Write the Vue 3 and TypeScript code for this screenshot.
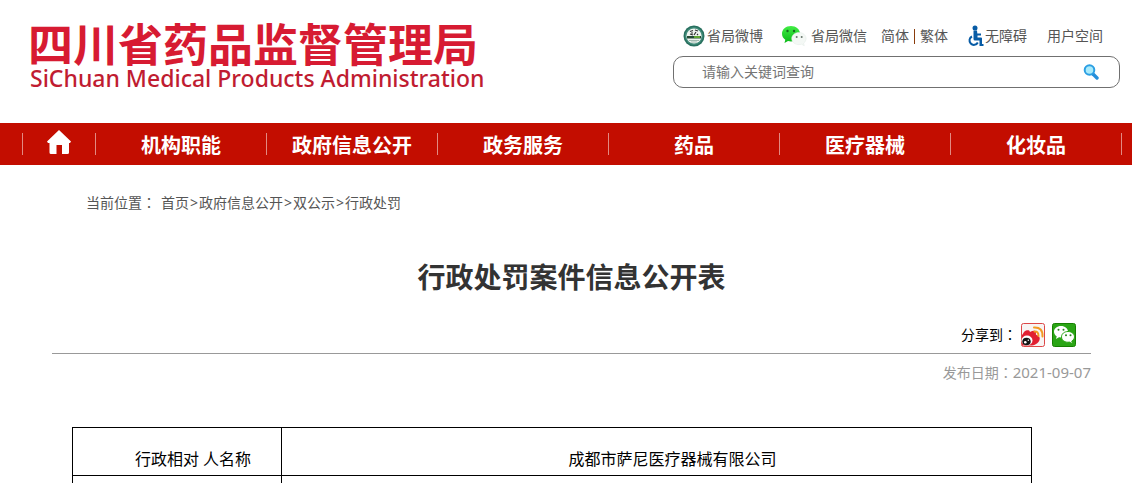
<script setup lang="ts">
import { ref } from 'vue'

const keyword = ref('')
const sections: string[] = ['机构职能', '政府信息公开', '政务服务', '药品', '医疗器械', '化妆品']
const crumbs: string[] = ['首页', '政府信息公开', '双公示', '行政处罚']
const rows: { label: string; value: string }[] = [
  { label: '行政相对 人名称', value: '成都市萨尼医疗器械有限公司' },
  { label: '', value: '' },
]
</script>

<template>
  <div class="page">
    <header class="header">
      <div class="brand">
        <div class="brand-cn">四川省药品监督管理局</div>
        <div class="brand-en">SiChuan Medical Products Administration</div>
      </div>
      <div class="tools">
        <nav class="links" aria-label="快捷链接">
          <a class="link weibo" href="#">
            <svg width="22" height="22" viewBox="0 0 22 22" aria-hidden="true">
              <circle cx="11" cy="11" r="10.5" fill="#28705f" />
              <circle cx="11" cy="11" r="9" fill="#438d7b" />
              <circle cx="11" cy="11" r="7.6" fill="#f0f5f1" />
              <path d="M7 6.500l3-1M12 5l3 1M8 8h2M13 7l-2 3M7 9l3 1M14 9l1 1" stroke="#333" stroke-width="1.2" fill="none" />
              <path d="M4 11h14v2.500H4z" fill="#254b36" />
              <path d="M11 11h6v2h-6z" fill="#60a735" />
              <path d="M6 15.500h10M8 17h6" stroke="#a1b8af" />
            </svg>
            <span>省局微博</span>
          </a>
          <a class="link wechat" href="#">
            <svg width="26" height="22" viewBox="0 0 26 22" aria-hidden="true">
              <defs>
                <linearGradient id="bubble-green" x1="0" y1="0" x2="0" y2="1">
                  <stop offset="0" stop-color="#42ed45" />
                  <stop offset="1" stop-color="#09b817" />
                </linearGradient>
              </defs>
              <path d="M10 1C4.700 1 1 4.300 1 8.700c0 2.500 1.300 4.600 3.300 6L3.500 18l3.500-2c1 .3 2 .4 3 .4 5 0 9-3.300 9-7.700S15 1 10 1z" fill="url(#bubble-green)" />
              <circle cx="6.500" cy="6" r="1.200" fill="#176a20" />
              <circle cx="13" cy="6" r="1.200" fill="#176a20" />
              <path d="M18 7.500c-4 0-7.300 2.600-7.300 6.100s3.300 6 7.300 6c1 0 1.800-.1 2.600-.4l2.700 1.600-.7-2.600c1.500-1.100 2.500-2.700 2.500-4.600 0-3.500-3.100-6.100-7.100-6.100z" fill="#f4f8f5" stroke="#e1ebe4" stroke-width=".5" />
              <circle cx="15.700" cy="12" r="1" fill="#68756b" />
              <circle cx="20.700" cy="12" r="1" fill="#68756b" />
            </svg>
            <span>省局微信</span>
          </a>
          <span class="scripts"><a href="#">简体</a><i class="bar"></i><a href="#">繁体</a></span>
          <a class="link access" href="#">
            <svg width="17" height="22" viewBox="0 0 17 22" aria-hidden="true">
              <circle cx="8" cy="3" r="2.500" fill="#075ba5" />
              <path d="M6.500 5.500h3.500l.3 3H14v2h-3.500v2H14q1 0 1 1v5.500h1.500V21H12.500v-5.500H8q-1.500 0-1.500-1.500z" fill="#075ba5" />
              <path d="M5 11.500A4.400 4.400 0 1 0 10.800 17.500" fill="none" stroke="#075ba5" stroke-width="2" />
            </svg>
            <span>无障碍</span>
          </a>
          <a class="link space" href="#">用户空间</a>
        </nav>
        <form class="search" role="search" @submit.prevent>
          <input v-model="keyword" type="text" placeholder="请输入关键词查询" aria-label="请输入关键词查询" />
          <button type="submit" aria-label="搜索">
            <svg width="16" height="16" viewBox="0 0 16 16" aria-hidden="true">
              <path d="M10 10l4 4" stroke="#258fdb" stroke-width="3.400" stroke-linecap="round" />
              <circle cx="6.500" cy="6" r="4.800" fill="#a9ebfb" stroke="#2c9fe3" stroke-width="2" />
            </svg>
          </button>
        </form>
      </div>
    </header>

    <nav class="menu" aria-label="主导航">
      <div class="menu-list">
        <a class="home" href="#" aria-label="首页">
          <svg width="24" height="24" viewBox="0 0 24 24" aria-hidden="true">
            <path d="M12 0L24 11.500l-1 1.500h-1v9.500q0 1.500-1.500 1.500H15v-9H9.500v9H4q-1.500 0-1.500-1.500V13H1l-1-1.500z" fill="#fff" />
          </svg>
        </a>
        <a v-for="name in sections" :key="name" class="section" href="#">{{ name }}</a>
      </div>
    </nav>

    <main class="main">
      <div class="crumbs">
        <span class="here">当前位置<span class="colon">：</span></span>
        <template v-for="(name, i) in crumbs" :key="name"><span v-if="i" class="arrow">&gt;</span><a href="#">{{ name }}</a></template>
      </div>
      <h1>行政处罚案件信息公开表</h1>
      <div class="share">
        <span class="share-label">分享到<span class="colon">：</span></span>
        <button type="button" aria-label="分享到微博">
          <svg width="24" height="24" viewBox="0 0 24 24" aria-hidden="true">
            <rect x=".5" y=".5" width="23" height="23" rx="2" fill="#f7f4f3" stroke="#dc4747" />
            <path d="M1 12c1-1 2-4 4-4.500 2-.4 3.500-.5 4 1.500 3-1.500 6-1.700 6 .5 0 1-.5 2 .5 2.500 3 .8 3.800 3 3 5-1 3.500-5 5.500-9 5.500H1z" fill="#e11f31" />
            <ellipse cx="6" cy="17.500" rx="5.500" ry="5" fill="#fff" />
            <ellipse cx="5.500" cy="18.500" rx="4.200" ry="3.800" fill="#151515" />
            <circle cx="4.300" cy="19.300" r="1.300" fill="#fff" />
            <circle cx="7.300" cy="17.300" r=".7" fill="#fff" />
            <path d="M13.500 8.500q4-.5 4 4.500M13 4.500q9-.5 8.500 9" fill="none" stroke="#f39a22" stroke-width="2" stroke-linecap="round" />
          </svg>
        </button>
        <button type="button" aria-label="分享到微信">
          <svg width="24" height="24" viewBox="0 0 24 24" aria-hidden="true">
            <rect x=".5" y=".5" width="23" height="23" rx="2" fill="#2aa515" stroke="#168000" />
            <path d="M9 3C5 3 2 5.500 2 8.700c0 1.900 1 3.500 2.700 4.500L4 16l3-1.700c5 .8 9-1.800 9-5.600C16 5.500 13 3 9 3z" fill="#fff" />
            <path d="M16 8.500c-3.700 0-6.500 2.300-6.500 5.400 0 3.500 3.600 5.900 8 5.200l3 1.900-.7-3c1.600-1 2.700-2.400 2.700-4.100 0-3.100-2.900-5.400-6.500-5.400z" fill="#fff" stroke="#2aa515" />
            <circle cx="6.500" cy="6.800" r="1" fill="#26851b" />
            <circle cx="11.500" cy="6.800" r="1" fill="#26851b" />
            <circle cx="14" cy="12.200" r="1" fill="#26851b" />
            <circle cx="18.500" cy="12.200" r="1" fill="#26851b" />
          </svg>
        </button>
      </div>
      <div class="date">发布日期<span class="colon">：</span><time datetime="2021-09-07">2021-09-07</time></div>
      <table class="record">
        <tbody>
          <tr v-for="(row, i) in rows" :key="i">
            <th scope="row">{{ row.label }}</th>
            <td>{{ row.value }}</td>
          </tr>
        </tbody>
      </table>
    </main>
  </div>
</template>

<style>
html {
  scrollbar-width: none;
}
body {
  margin: 0;
  background: #fff;
}
</style>

<style scoped>
.page {
  font-family: "Noto Sans", "Noto Sans CJK SC", sans-serif;
  font-size: 14px;
  line-height: 20px;
  color: #555;
}
a {
  color: inherit;
  text-decoration: none;
}
svg {
  display: block;
  flex: none;
}
button {
  padding: 0;
  border: 0;
  background: none;
  cursor: pointer;
}
.colon {
  font-family: "Noto Sans CJK TC", sans-serif;
  line-height: 1;
}
.header {
  display: flex;
  justify-content: space-between;
  align-items: flex-start;
  box-sizing: border-box;
  min-height: 123px;
  padding: 24px 12px 0 28px;
}
.brand {
  white-space: nowrap;
  color: #d71b32;
}
.brand-cn {
  font-family: "Noto Sans CJK SC", sans-serif;
  font-size: 45px;
  font-weight: 700;
  line-height: 38px;
}
.brand-en {
  margin-top: 6px;
  padding-left: 2px;
  font-size: 23px;
  font-weight: 500;
  line-height: 20px;
  color: #c01c31;
}
.tools {
  width: 447px;
}
.links {
  display: flex;
  align-items: center;
  height: 24px;
  padding-left: 10px;
  white-space: nowrap;
}
.link {
  display: flex;
  align-items: center;
}
.weibo {
  gap: 2px;
}
.wechat {
  gap: 4px;
  margin-left: 18px;
}
.scripts {
  display: flex;
  align-items: center;
  margin-left: 14px;
}
.access {
  gap: 1px;
  margin-left: 19px;
}
.space {
  margin-left: 20px;
}
.bar {
  width: 1px;
  height: 15px;
  margin: 0 5px;
  background: #8a3c0c;
}
.search {
  display: flex;
  align-items: center;
  box-sizing: border-box;
  height: 32px;
  margin-top: 8px;
  padding: 0 20px 0 28px;
  border: 1px solid #707070;
  border-radius: 10px;
}
.search input {
  flex: 1;
  min-width: 0;
  padding: 0;
  border: 0;
  outline: 0;
  background: none;
  font: inherit;
  color: #555;
}
.search input::placeholder {
  color: #757575;
  opacity: 1;
}
.menu {
  background: #c30d00;
  padding: 0 10px 0 22px;
}
.menu-list {
  display: flex;
  align-items: center;
  height: 42px;
  color: #fff;
}
.home,
.section {
  display: flex;
  align-items: center;
  justify-content: center;
  box-sizing: border-box;
  height: 22px;
  border-left: 1px solid #e28a82;
}
.home {
  width: 73px;
}
.home svg {
  margin-bottom: 4px;
}
.section {
  flex: 1;
  padding-top: 3px;
  font-size: 20px;
  font-weight: 700;
  white-space: nowrap;
}
.section:last-child {
  border-right: 1px solid #e28a82;
}
.main {
  padding: 28px 41px 0 52px;
}
.crumbs {
  display: flex;
  padding-left: 34px;
}
.here {
  margin-right: 5px;
}
.arrow {
  margin: 0 1px;
}
h1 {
  margin: 44px 0 0;
  font-size: 28px;
  line-height: 40px;
  font-weight: 700;
  text-align: center;
  color: #333;
}
.share {
  display: flex;
  align-items: center;
  justify-content: flex-end;
  gap: 7px;
  height: 36px;
  margin-top: 20px;
  padding-right: 15px;
  border-bottom: 1px solid #999;
  color: #000;
}
.share-label {
  margin-right: -3px;
}
.date {
  margin-top: 8px;
  text-align: right;
  color: #999;
}
.date time {
  font-size: 15px;
}
.record {
  width: calc(100% - 79px);
  margin: 44px 0 0 20px;
  border-collapse: collapse;
  table-layout: fixed;
  font-size: 16px;
  line-height: 24px;
  color: #000;
}
.record th,
.record td {
  height: 43px;
  padding: 0 0 4px;
  border: 1px solid #000;
  font-weight: 400;
  text-align: center;
  text-indent: 32px;
  vertical-align: bottom;
}
.record th {
  width: 208px;
}
</style>
